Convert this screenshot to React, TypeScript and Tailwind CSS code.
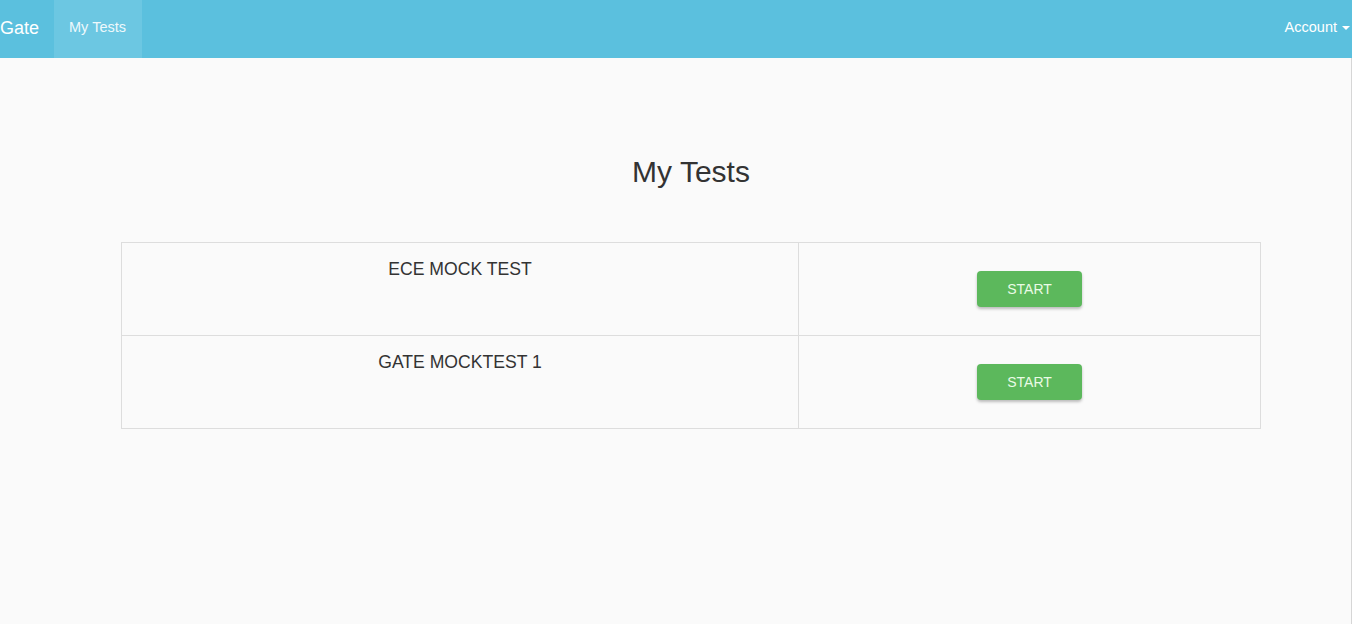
import React from 'react';

const tests = [
  { id: 1, name: 'ECE MOCK TEST' },
  { id: 2, name: 'GATE MOCKTEST 1' },
];

const App: React.FC = () => {
  return (
    <div
      className="min-h-[624px] bg-[#fafafa] text-[#333]"
      style={{ fontFamily: '"Liberation Sans", Arial, sans-serif' }}
    >
      {/* Navbar */}
      <nav className="h-[58px] bg-[#5bc0de] flex items-stretch justify-between text-white">
        <div className="flex items-stretch">
          <a className="flex items-center text-[18px] pr-[15px] pb-[2px]">Gate</a>
          <a className="flex items-center pl-[15px] pr-[16px] pb-[2px] text-[14.5px] bg-[#6cc7e2] text-[#eef9fc]">My Tests</a>
        </div>
        <a className="flex items-center text-[14.5px] pl-[15px] pr-[2px] pb-[2px]">
          Account
          <span className="ml-[5px] w-0 h-0 border-l-[4px] border-r-[4px] border-t-[4px] border-l-transparent border-r-transparent border-t-white" />
        </a>
      </nav>

      <div className="border-r border-[#d6d6d6] min-h-[566px]">
        <div className="ml-[121px] w-[1140px]">
          <h1 className="text-center text-[30px] leading-[33px] pt-[97px] pb-[54px]">My Tests</h1>

          <table className="w-full border-collapse border border-[#ddd]">
            <tbody>
              {tests.map((t) => (
                <tr key={t.id} className="h-[93px]">
                  <td className="w-[677px] border border-[#ddd] align-top text-center text-[17.6px] pt-[13px]">
                    {t.name}
                  </td>
                  <td className="border border-[#ddd] align-top text-center pt-[28px]">
                    <button className="w-[105px] h-[36px] bg-[#5cb85c] rounded-[4px] text-[14px] text-[#eafbe6] shadow-[0_2px_3px_rgba(0,0,0,0.25)]">
                      START
                    </button>
                  </td>
                </tr>
              ))}
            </tbody>
          </table>
        </div>
      </div>
    </div>
  );
};

export default App;
